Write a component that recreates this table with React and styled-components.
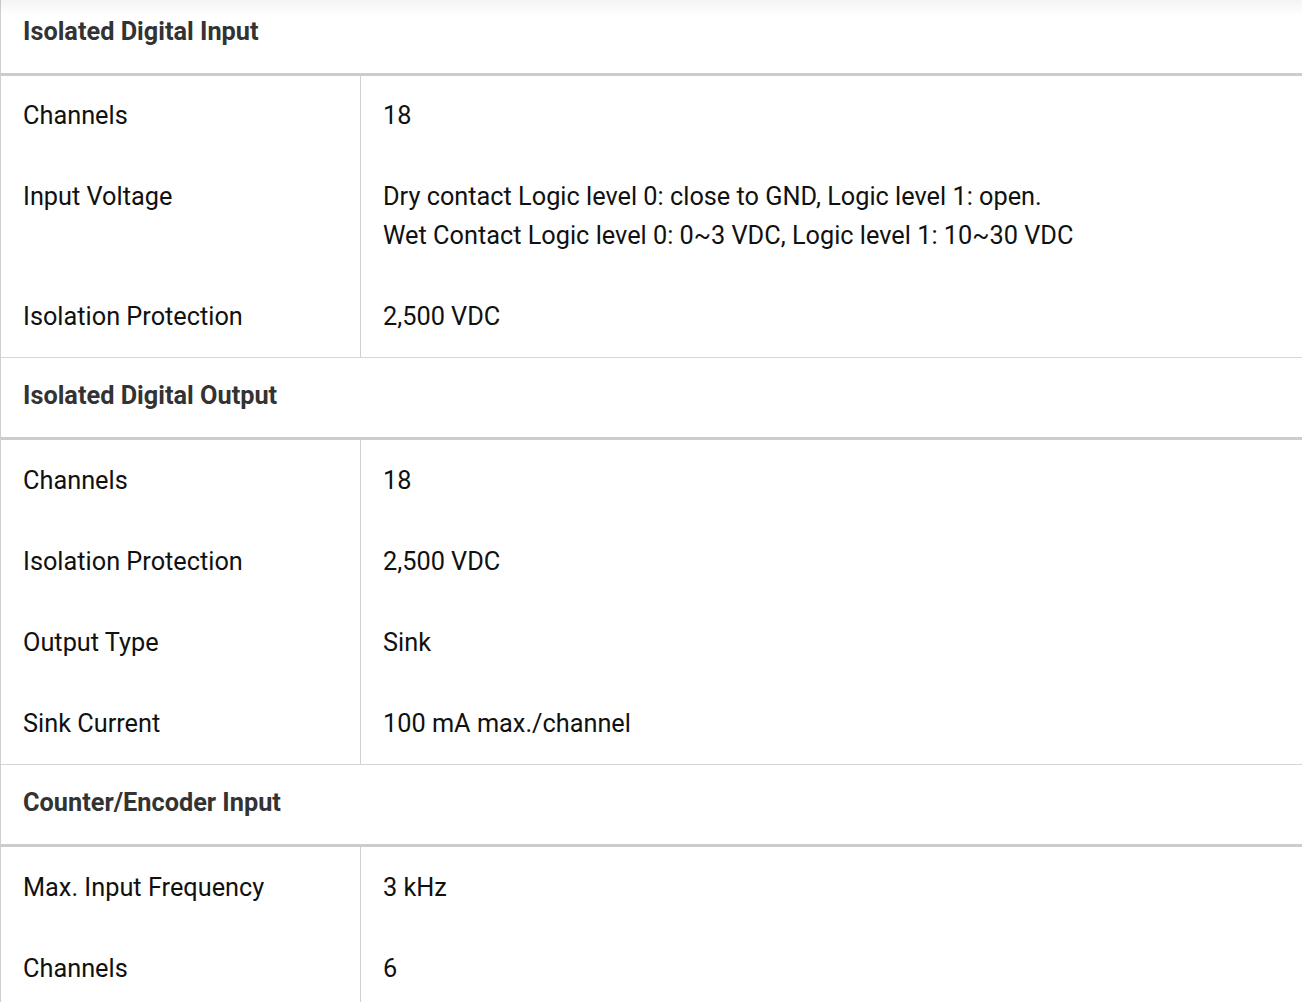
import styled, { createGlobalStyle } from "styled-components";

const GlobalStyle = createGlobalStyle`
  body {
    margin: 0;
    background: #fff;
    font-family: Roboto, "Liberation Sans", Arial, sans-serif;
  }
`;

const specs = [
  {
    title: "Isolated Digital Input",
    rows: [
      { label: "Channels", value: ["18"] },
      {
        label: "Input Voltage",
        value: [
          "Dry contact Logic level 0: close to GND, Logic level 1: open.",
          "Wet Contact Logic level 0: 0~3 VDC, Logic level 1: 10~30 VDC",
        ],
      },
      { label: "Isolation Protection", value: ["2,500 VDC"] },
    ],
  },
  {
    title: "Isolated Digital Output",
    rows: [
      { label: "Channels", value: ["18"] },
      { label: "Isolation Protection", value: ["2,500 VDC"] },
      { label: "Output Type", value: ["Sink"] },
      { label: "Sink Current", value: ["100 mA max./channel"] },
    ],
  },
  {
    title: "Counter/Encoder Input",
    rows: [
      { label: "Max. Input Frequency", value: ["3 kHz"] },
      { label: "Channels", value: ["6"] },
    ],
  },
];

const App = () => {
  return (
    <Page>
      <GlobalStyle />
      <TopShade />
      <Table>
        {specs.map(section => (
          <Section key={section.title}>
            <SectionHeader>{section.title}</SectionHeader>
            {section.rows.map((row, i) => (
              <Row key={i}>
                <Label>{row.label}</Label>
                <Value>
                  {row.value.map(line => (
                    <div key={line}>{line}</div>
                  ))}
                </Value>
              </Row>
            ))}
          </Section>
        ))}
      </Table>
    </Page>
  );
};

export default App;

const Page = styled.div`
  position: relative;
  height: 1002px;
  overflow: hidden;
`;

// soft shadow cast by a sticky bar above the viewport
const TopShade = styled.div`
  position: absolute;
  top: 0;
  left: 0;
  right: 0;
  height: 16px;
  background: linear-gradient(to bottom, rgba(0, 0, 0, 0.045), rgba(0, 0, 0, 0));
  pointer-events: none;
  z-index: 1;
`;

const Table = styled.div`
  margin-top: -6px;
  border-left: 1px solid #cfcfcf;
`;

const Section = styled.div`
  border-bottom: 1px solid #d6d6d6;
`;

const SectionHeader = styled.div`
  height: 75px;
  box-sizing: content-box;
  display: flex;
  align-items: center;
  padding: 0 0 4px 22px;
  font-size: 25.3px;
  font-weight: 700;
  color: #333;
  border-bottom: 3px solid #cccccc;
`;

const Row = styled.div`
  display: grid;
  grid-template-columns: 360px 1fr;
  font-size: 25.3px;
  line-height: 38.4px;
  color: #111;
`;

const Label = styled.div`
  padding: 21.3px 22px;
  border-right: 1px solid #d0d0d0;
`;

const Value = styled.div`
  padding: 21.3px 22px;
`;
